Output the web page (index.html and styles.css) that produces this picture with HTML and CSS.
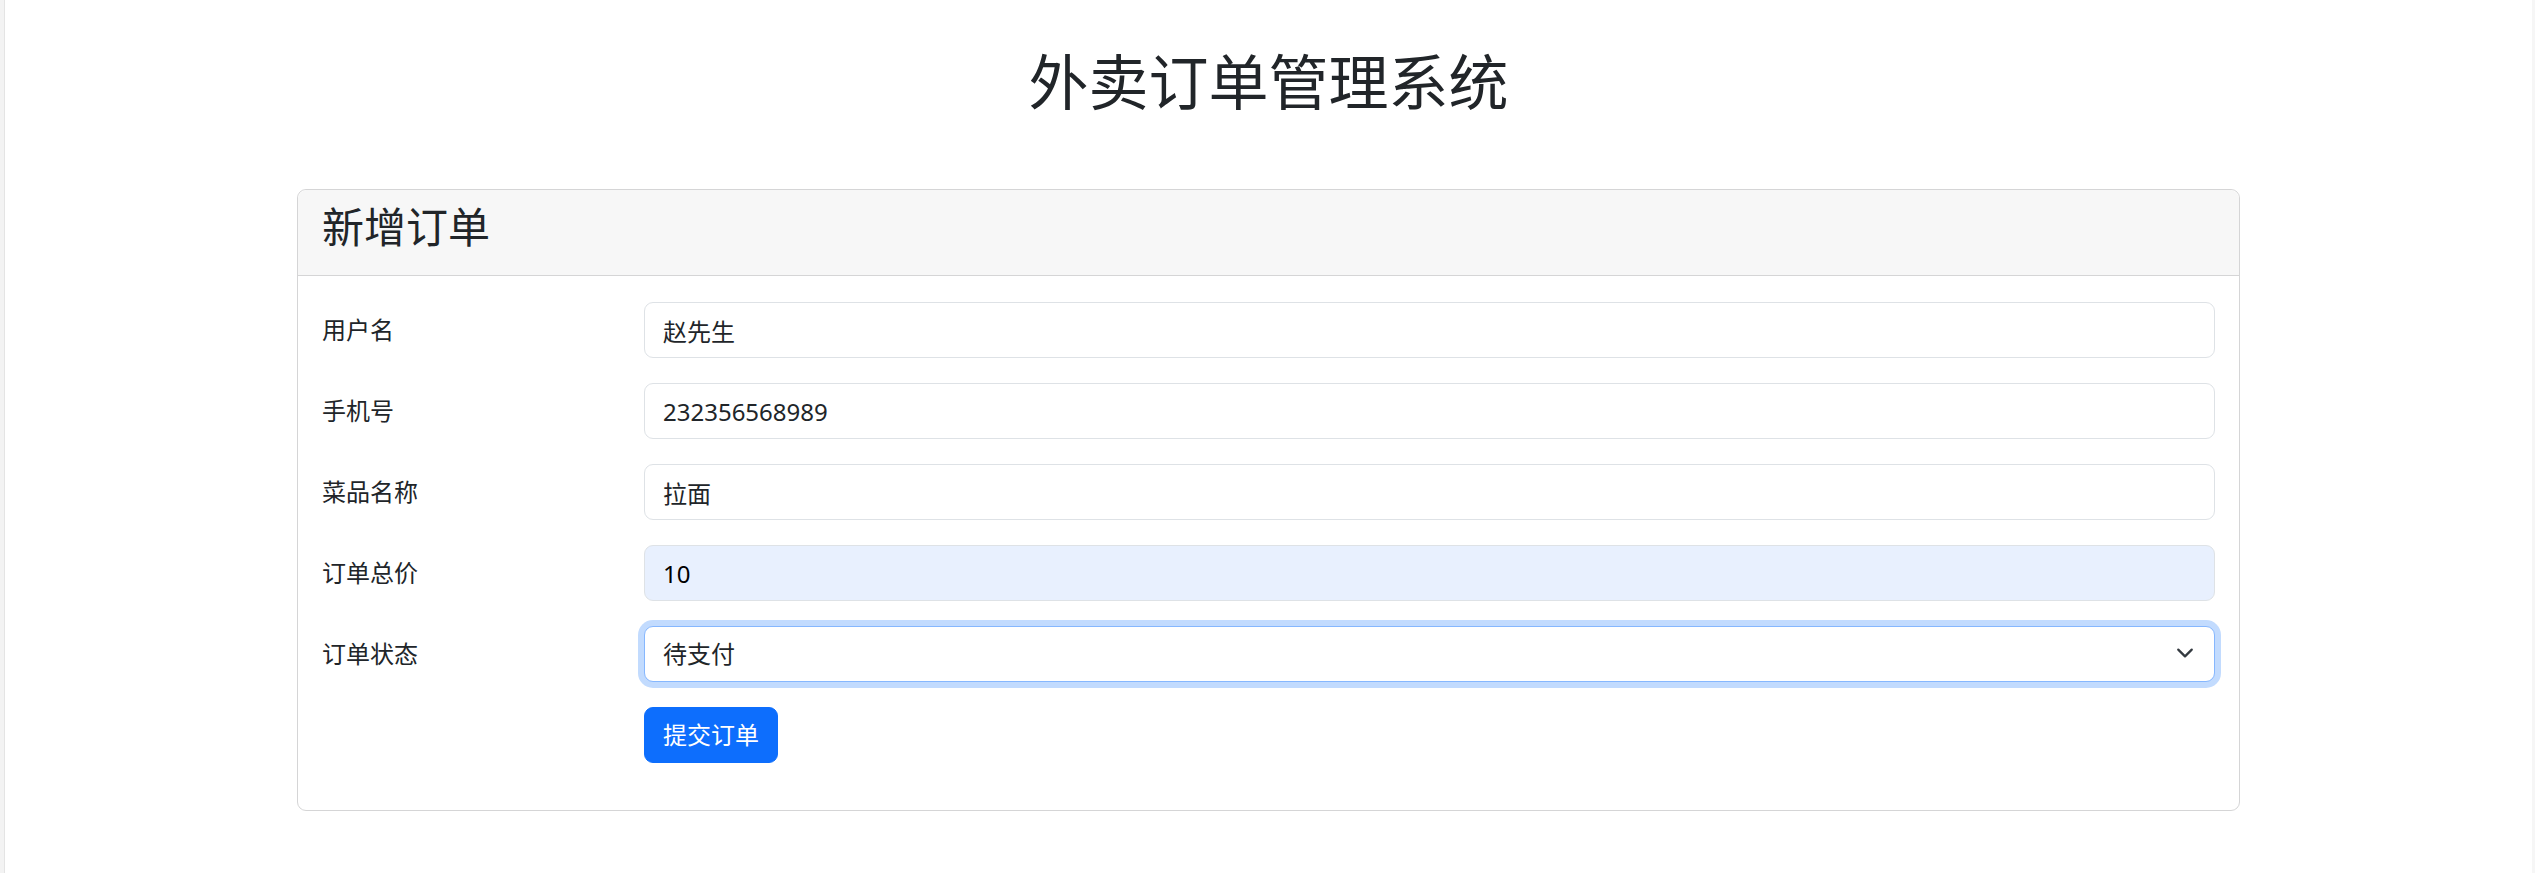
FILE: index.html
```html
<!DOCTYPE html>
<html lang="zh-CN">
<head>
  <meta charset="UTF-8">
  <meta name="viewport" content="width=device-width, initial-scale=1.0">
  <title>外卖订单管理系统</title>
  <link rel="stylesheet" href="styles.css">
</head>
<body>

  <div class="container">
    <h1 class="page-title">外卖订单管理系统</h1>

    <div class="card">
      <div class="card-header">
        <h3>新增订单</h3>
      </div>
      <div class="card-body">
        <form id="orderForm" class="order-form">
          <label for="username">用户名</label>
          <input type="text" id="username" name="username" value="赵先生">

          <label for="phone">手机号</label>
          <input type="text" id="phone" name="phone" value="232356568989">

          <label for="dish">菜品名称</label>
          <input type="text" id="dish" name="dish" value="拉面">

          <label for="price">订单总价</label>
          <input type="number" id="price" name="price" class="autofilled" value="10">

          <label for="status">订单状态</label>
          <div class="select-wrap">
            <select id="status" name="status" class="focused">
              <option value="待支付">待支付</option>
              <option value="已支付">已支付</option>
              <option value="配送中">配送中</option>
              <option value="已完成">已完成</option>
            </select>
            <!-- flecha del desplegable -->
            <svg class="chevron" viewBox="0 0 16 16" width="18" height="18">
              <path fill="none" stroke="#343a40" stroke-linecap="round" stroke-linejoin="round" stroke-width="2" d="m2 5 6 6 6-6"/>
            </svg>
          </div>

          <button type="submit">提交订单</button>
        </form>
      </div>
    </div>
  </div>

</body>
</html>
```

FILE: styles.css
```css
html { background: linear-gradient(to right, #f3f3f3 0 4px, #e4e4e4 4px 5px, transparent 5px), linear-gradient(to left, #f6f6f6 0 3px, #fff 3px); min-height: 100%; }
body { margin: 0; padding: 46px 0 0 2px; font-family: "Noto Sans", "Noto Sans CJK SC", sans-serif; font-size: 24px; line-height: 36px; color: #212529; }
.container { max-width: 1943px; margin: 0 auto; }
.page-title { margin: 0 0 71px; font-size: 60px; line-height: 72px; font-weight: 400; text-align: center; }

.card { border: 1px solid #d5d5d6; border-radius: 9px; background: #fff; }
.card-header { padding: 12px 24px 11px; background-color: #f7f7f7; border-bottom: 1px solid #d5d5d6; border-radius: 9px 9px 0 0; }
.card-header h3 { margin: 0 0 12px; font-size: 42px; line-height: 50px; font-weight: 400; }
.card-body { padding: 26px 24px 22px; }

.order-form { display: grid; grid-template-columns: 286px 1fr; column-gap: 36px; row-gap: 25px; padding-bottom: 25px; }
.order-form label { padding-top: 10px; line-height: 36px; }
input, select { box-sizing: border-box; width: 100%; height: 56px; padding: 9px 18px; margin: 0; font: inherit; line-height: 36px; color: #212529; background-color: #fff; border: 1px solid #dee2e6; border-radius: 9px; outline: none; }
input.autofilled { background-color: #e8f0fe; color: #000; }
select { appearance: none; padding-right: 54px; }
select.focused { border-color: #86b7fe; box-shadow: 0 0 0 6px rgba(13, 110, 253, .25); }
.select-wrap { position: relative; }
.chevron { position: absolute; top: 18px; right: 21px; pointer-events: none; }

button { grid-column: 2; justify-self: start; height: 56px; padding: 9px 18px; font: inherit; line-height: 36px; color: #fff; background-color: #0d6efd; border: 1px solid #0d6efd; border-radius: 9px; cursor: pointer; }
button:hover { background-color: #0b5ed7; }
```
